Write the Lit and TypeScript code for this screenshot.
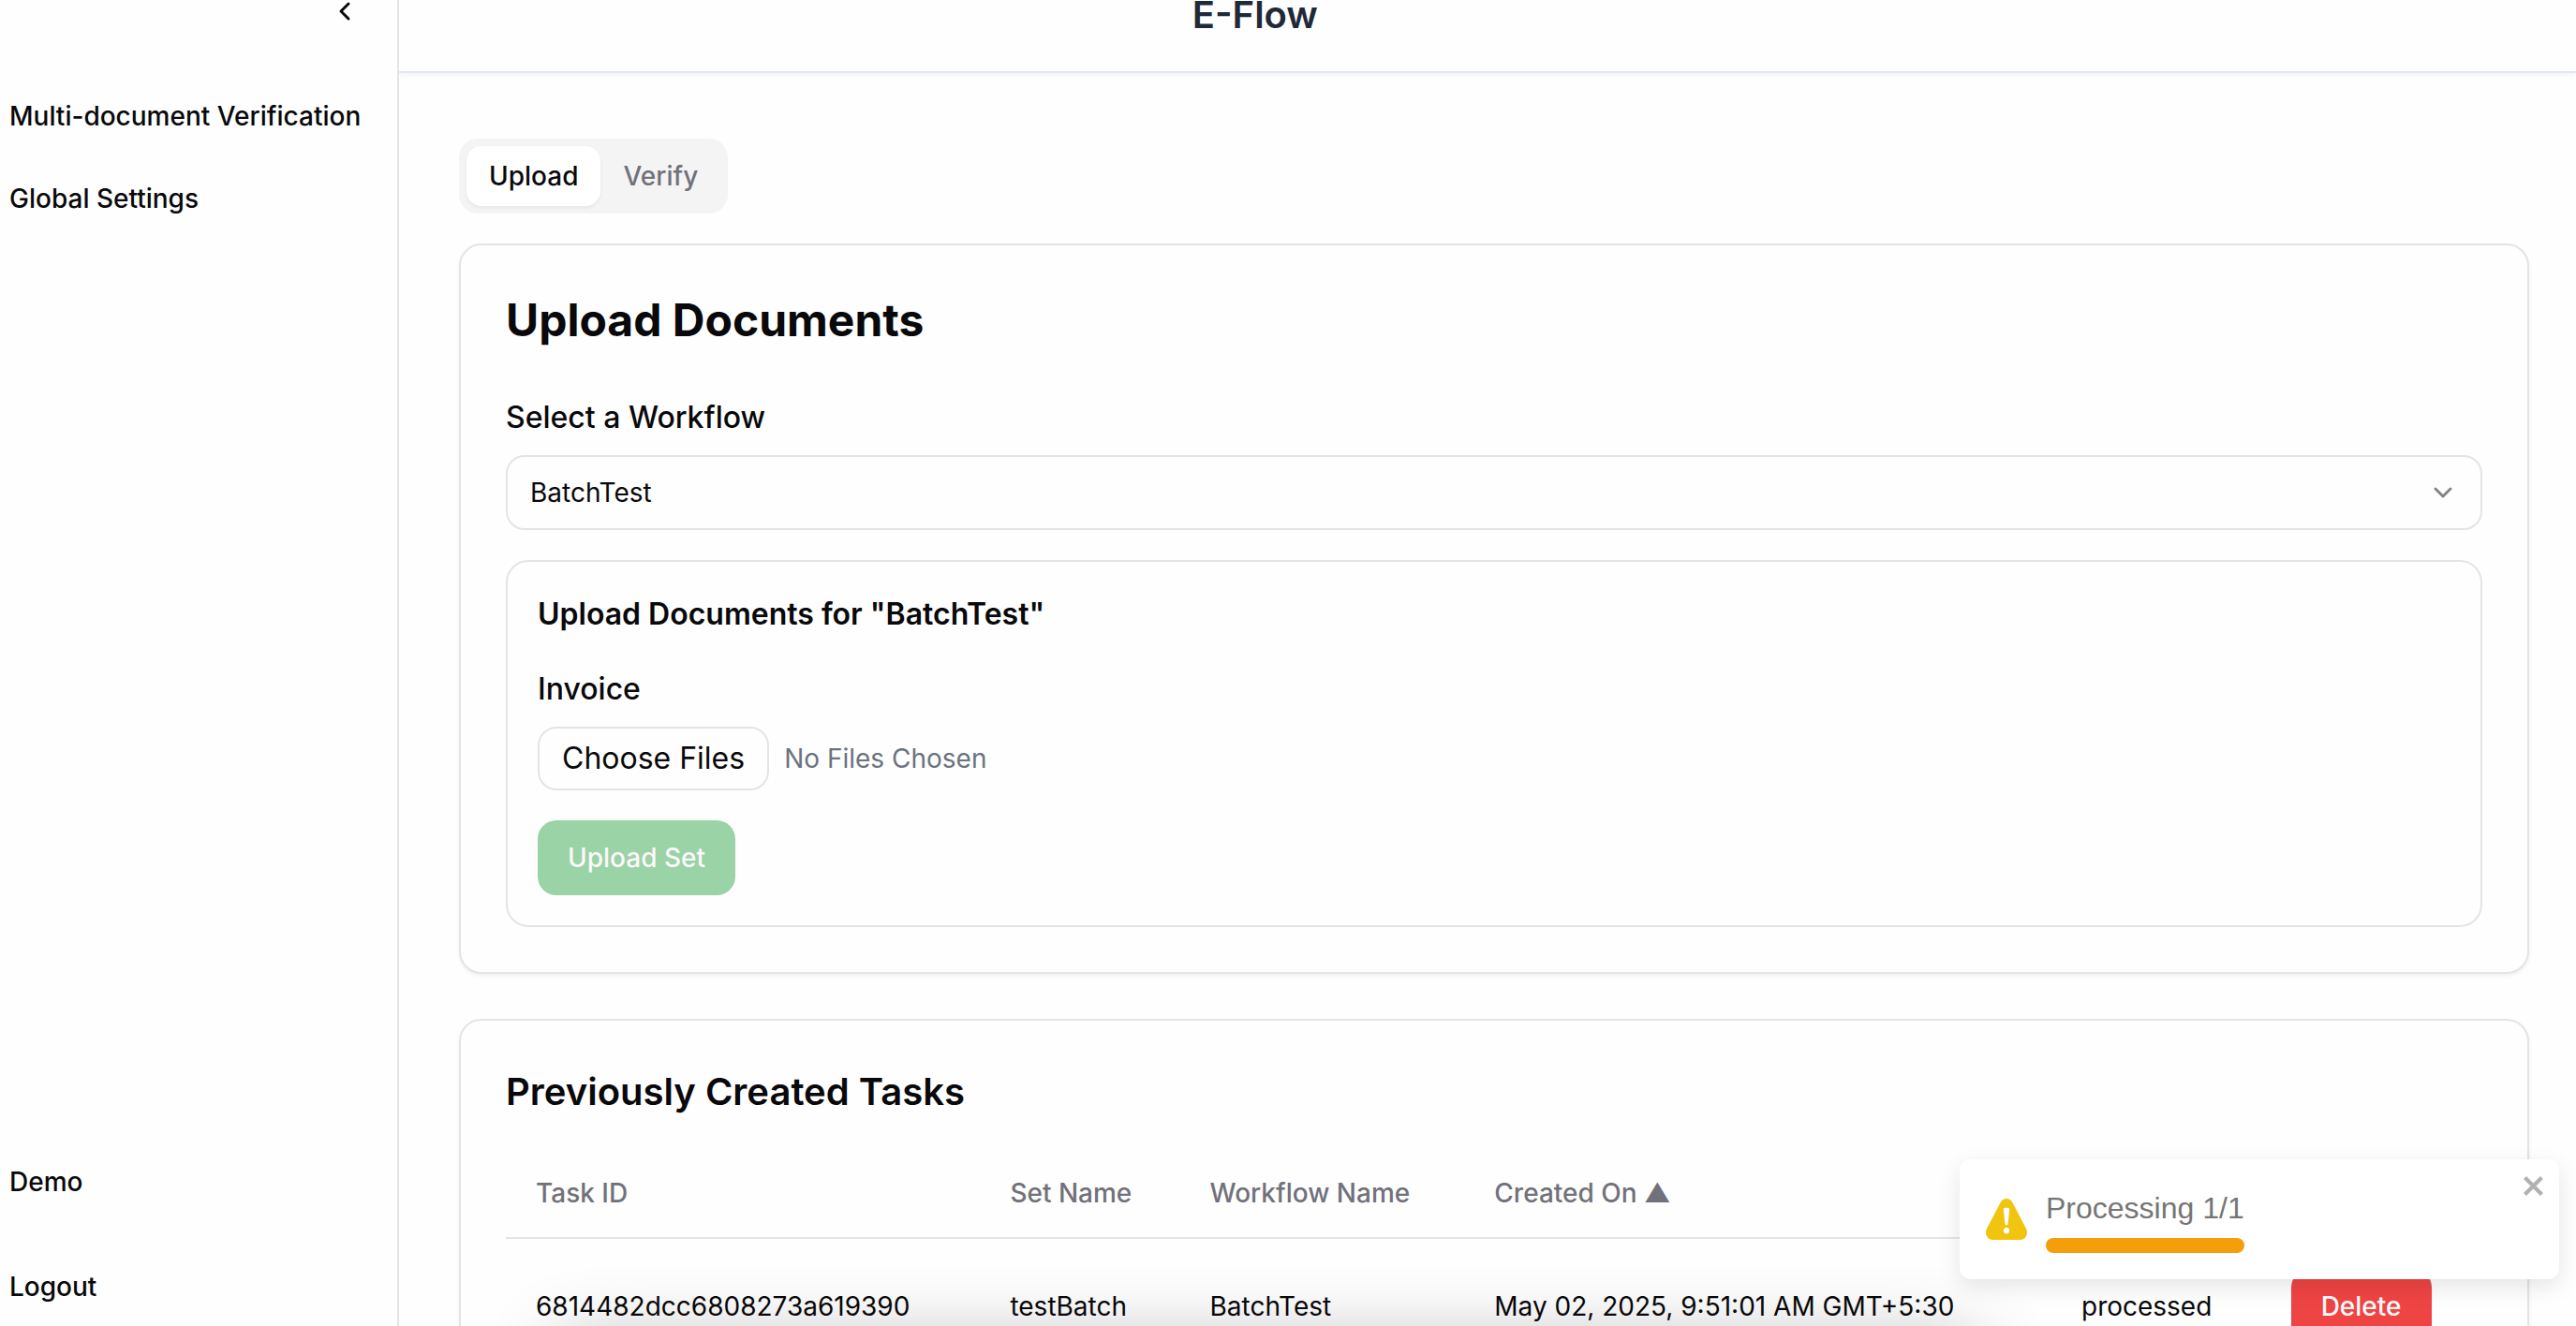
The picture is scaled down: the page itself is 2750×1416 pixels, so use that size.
import { LitElement, html, css } from "lit";
import { customElement, property, state } from "lit/decorators.js";

interface Task {
  id: string;
  setName: string;
  workflow: string;
  createdOn: string;
  status: string;
}

const TASKS: Task[] = [
  {
    id: "6814482dcc6808273a619390",
    setName: "testBatch",
    workflow: "BatchTest",
    createdOn: "May 02, 2025, 9:51:01 AM GMT+5:30",
    status: "processed",
  },
];

@customElement("app-sidebar")
export class AppSidebar extends LitElement {
  static styles = css`
    :host {
      display: flex;
      flex-direction: column;
      justify-content: space-between;
      box-sizing: border-box;
      height: 100%;
      border-right: 2px solid #e4e4e7;
    }
    .group {
      display: flex;
      flex-direction: column;
    }
    .collapse {
      align-self: flex-end;
      display: flex;
      margin: 0 40px 0 0;
      padding: 0;
      border: 0;
      background: none;
      color: #09090b;
      height: 28px;
      align-items: flex-start;
    }
    .top {
      gap: 48px;
    }
    .links {
      display: flex;
      flex-direction: column;
      padding: 28px 10px 0;
      gap: 48px;
    }
    .bottom {
      padding: 0 10px 22px;
      gap: 72px;
    }
    a {
      color: #09090b;
      font-size: 28px;
      line-height: 40px;
      font-weight: 500;
      text-decoration: none;
      white-space: nowrap;
    }
  `;

  render() {
    return html`
      <div class="group top">
        <button class="collapse" aria-label="Collapse sidebar">
          <svg width="32" height="24" viewBox="0 0 32 24" fill="none" stroke="currentColor" stroke-width="3" stroke-linecap="round" stroke-linejoin="round">
            <path d="M20 4l-8 8 8 8" />
          </svg>
        </button>
        <nav class="links">
          <a href="#multi-document">Multi-document Verification</a>
          <a href="#settings">Global Settings</a>
        </nav>
      </div>
      <nav class="group bottom">
        <a href="#demo">Demo</a>
        <a href="#logout">Logout</a>
      </nav>
    `;
  }
}

@customElement("upload-panel")
export class UploadPanel extends LitElement {
  @state() private workflow = "BatchTest";

  static styles = css`
    :host {
      display: flex;
      flex-direction: column;
      box-sizing: border-box;
      padding: 48px;
      border: 2px solid #e4e4e7;
      border-radius: 24px;
      background: #fefefe;
      box-shadow: 0 2px 4px rgba(0, 0, 0, 0.06);
    }
    h2,
    h3 {
      margin: 0;
    }
    h2 {
      font-size: 48px;
      line-height: 64px;
      font-weight: 700;
    }
    label {
      font-size: 32px;
      line-height: 48px;
      font-weight: 500;
    }
    .field-label {
      margin-top: 48px;
    }
    .select-wrap {
      display: grid;
      align-items: center;
      margin-top: 16px;
    }
    .select-wrap > * {
      grid-area: 1 / 1;
    }
    select {
      appearance: none;
      width: 100%;
      height: 80px;
      padding: 0 24px;
      border: 2px solid #e4e4e7;
      border-radius: 20px;
      background: #fefefe;
      color: #09090b;
      font: 400 28px/40px Inter, sans-serif;
    }
    .caret {
      justify-self: end;
      margin-right: 26px;
      pointer-events: none;
    }
    .set {
      display: flex;
      flex-direction: column;
      align-items: flex-start;
      margin-top: 32px;
      padding: 32px;
      border: 2px solid #e4e4e7;
      border-radius: 24px;
    }
    h3 {
      font-size: 32px;
      line-height: 48px;
      font-weight: 600;
    }
    .invoice {
      margin-top: 32px;
    }
    .files {
      display: flex;
      align-items: center;
      gap: 16px;
      margin-top: 16px;
    }
    .choose {
      height: 68px;
      padding: 0 24px;
      border: 2px solid #e4e4e7;
      border-radius: 20px;
      background: #fefefe;
      color: #09090b;
      font: 400 32px/48px Inter, sans-serif;
    }
    .hint {
      color: #6b7280;
      font-size: 28px;
      line-height: 40px;
    }
    .submit {
      height: 80px;
      margin-top: 32px;
      padding: 0 32px;
      border: 0;
      border-radius: 20px;
      background: #99d3a6;
      color: #fdf7f9;
      font: 500 28px/40px Inter, sans-serif;
    }
  `;

  private onPick(e: Event) {
    this.workflow = (e.target as HTMLSelectElement).value;
  }

  render() {
    return html`
      <h2>Upload Documents</h2>
      <label class="field-label" for="workflow">Select a Workflow</label>
      <div class="select-wrap">
        <select id="workflow" @change=${this.onPick}>
          <option value="BatchTest" selected>BatchTest</option>
        </select>
        <svg class="caret" width="32" height="32" viewBox="0 0 32 32" fill="none" stroke="#848484" stroke-width="3" stroke-linecap="round" stroke-linejoin="round">
          <path d="M8 12l8 8 8-8" />
        </svg>
      </div>
      <section class="set">
        <h3>Upload Documents for "${this.workflow}"</h3>
        <label class="invoice" for="choose">Invoice</label>
        <div class="files">
          <button id="choose" class="choose">Choose Files</button>
          <span class="hint">No Files Chosen</span>
        </div>
        <button class="submit" disabled>Upload Set</button>
      </section>
    `;
  }
}

@customElement("task-table")
export class TaskTable extends LitElement {
  @property({ attribute: false }) tasks: Task[] = [];

  static styles = css`
    :host {
      display: block;
      box-sizing: border-box;
      padding: 48px;
      border: 2px solid #e4e4e7;
      border-radius: 24px;
      background: #fefefe;
      box-shadow: 0 2px 4px rgba(0, 0, 0, 0.06);
    }
    h2 {
      margin: 0 0 32px;
      font-size: 40px;
      line-height: 56px;
      font-weight: 600;
    }
    table {
      width: 100%;
      border-collapse: collapse;
      table-layout: fixed;
      font-size: 28px;
      line-height: 40px;
    }
    .c-id {
      width: 24%;
    }
    .c-set {
      width: 10.1%;
    }
    .c-flow {
      width: 14.4%;
    }
    .c-date {
      width: 29.7%;
    }
    .c-status {
      width: 10.6%;
    }
    th,
    td {
      text-align: left;
      white-space: nowrap;
      border-bottom: 2px solid #e4e4e7;
    }
    th {
      height: 96px;
      padding: 0 32px;
      color: #71717a;
      font-weight: 500;
      box-sizing: border-box;
    }
    td {
      padding: 32px;
    }
    .delete {
      height: 80px;
      padding: 0 32px;
      border: 0;
      border-radius: 20px;
      background: #ef4444;
      color: #fafafa;
      font: 500 28px/40px Inter, sans-serif;
    }
  `;

  render() {
    return html`
      <h2>Previously Created Tasks</h2>
      <table>
        <colgroup>
          <col class="c-id" />
          <col class="c-set" />
          <col class="c-flow" />
          <col class="c-date" />
          <col class="c-status" />
          <col />
        </colgroup>
        <thead>
          <tr>
            <th>Task ID</th>
            <th>Set Name</th>
            <th>Workflow Name</th>
            <th>Created On ▲</th>
            <th aria-label="Status"></th>
            <th aria-label="Actions"></th>
          </tr>
        </thead>
        <tbody>
          ${this.tasks.map(
            (t) => html`
              <tr>
                <td>${t.id}</td>
                <td>${t.setName}</td>
                <td>${t.workflow}</td>
                <td>${t.createdOn}</td>
                <td>${t.status}</td>
                <td><button class="delete">Delete</button></td>
              </tr>
            `
          )}
        </tbody>
      </table>
    `;
  }
}

@customElement("progress-toast")
export class ProgressToast extends LitElement {
  static styles = css`
    :host {
      display: flex;
      align-items: flex-start;
      box-sizing: border-box;
      width: 640px;
      min-height: 128px;
      padding: 12px 12px 12px 28px;
      border-radius: 12px;
      background: #fff;
      color: #757575;
      box-shadow: 0 8px 24px rgba(0, 0, 0, 0.1);
      font: 400 32px/48px "Liberation Sans", Arial, sans-serif;
    }
    .icon {
      align-self: center;
      flex: none;
      margin-right: 20px;
    }
    .body {
      align-self: center;
    }
    .bar {
      height: 16px;
      margin-top: 8px;
      border-radius: 8px;
      background: #f59e0b;
    }
    .close {
      display: flex;
      margin-left: auto;
      padding: 0;
      border: 0;
      background: none;
      color: #000;
      opacity: 0.3;
    }
  `;

  render() {
    return html`
      <svg class="icon" width="44" height="44" viewBox="0 0 24 24" fill="#f1c40f">
        <path d="M23.32 17.191L15.438 2.184C14.728.833 13.416 0 11.996 0c-1.42 0-2.733.833-3.443 2.184L.533 17.448a4.744 4.744 0 000 4.368C1.243 23.167 2.555 24 3.975 24h16.05C22.22 24 24 22.044 24 19.632c0-.904-.251-1.746-.68-2.44zm-9.622 1.46c0 1.033-.724 1.823-1.698 1.823s-1.698-.79-1.698-1.822v-.043c0-1.028.724-1.822 1.698-1.822s1.698.79 1.698 1.822v.043zm.039-12.285l-.84 8.06c-.057.581-.408.943-.897.943-.49 0-.84-.367-.896-.942l-.84-8.065c-.057-.624.25-1.095.779-1.095h1.91c.528.005.84.476.784 1.1z" />
      </svg>
      <div class="body" role="status">
        <div>Processing 1/1</div>
        <div class="bar"></div>
      </div>
      <button class="close" aria-label="Close">
        <svg width="28" height="32" viewBox="0 0 14 16" fill="currentColor">
          <path d="M7.71 8.23l3.75 3.75-1.48 1.48-3.75-3.75-3.75 3.75L1 11.98l3.75-3.75L1 4.48 2.48 3l3.75 3.75L9.98 3l1.48 1.48-3.75 3.75z" />
        </svg>
      </button>
    `;
  }
}

@customElement("app-root")
export class AppRoot extends LitElement {
  @state() private tab: "upload" | "verify" = "upload";

  static styles = css`
    :host {
      display: grid;
      grid-template-columns: 426px minmax(0, 1fr);
      position: relative;
      height: 100vh;
      overflow: hidden;
      background: #fefefe;
      color: #09090b;
      font-family: Inter, sans-serif;
    }
    .main {
      display: flex;
      flex-direction: column;
      min-height: 0;
      overflow: hidden;
    }
    .header {
      display: flex;
      flex: none;
      padding-bottom: 44px;
      border-bottom: 2px solid #e2e8f0;
      box-shadow: 0 2px 4px rgba(0, 0, 0, 0.05);
    }
    .header::before {
      content: "";
      flex: 848;
    }
    .header::after {
      content: "";
      flex: 1345;
    }
    .title {
      margin: 0;
      color: #1f2937;
      font-size: 40px;
      line-height: 32px;
      font-weight: 600;
    }
    .content {
      display: flex;
      flex: none;
      flex-direction: column;
      padding: 70px 50px 48px 64px;
    }
    .tabs {
      display: flex;
      align-self: flex-start;
      padding: 8px;
      border-radius: 20px;
      background: #f4f4f5;
    }
    .tab {
      height: 64px;
      padding: 0 24px;
      border: 0;
      border-radius: 16px;
      background: none;
      color: #71717a;
      font: 500 28px/40px Inter, sans-serif;
    }
    .tab[aria-selected="true"] {
      background: #fff;
      color: #09090b;
      box-shadow: 0 2px 4px rgba(0, 0, 0, 0.06);
    }
    upload-panel {
      margin-top: 32px;
    }
    task-table {
      margin-top: 48px;
    }
    .shade {
      position: absolute;
      left: 596px;
      right: 640px;
      bottom: -120px;
      height: 100px;
      box-shadow: 0 0 80px rgba(0, 0, 0, 0.3);
      pointer-events: none;
    }
    progress-toast {
      position: absolute;
      right: 18px;
      bottom: 50px;
    }
  `;

  private tabButton(id: "upload" | "verify", label: string) {
    return html`<button
      class="tab"
      role="tab"
      aria-selected=${this.tab === id ? "true" : "false"}
      @click=${() => (this.tab = id)}
    >${label}</button>`;
  }

  render() {
    return html`
      <app-sidebar></app-sidebar>
      <div class="main">
        <header class="header"><h1 class="title">E-Flow</h1></header>
        <main class="content">
          <div class="tabs" role="tablist">
            ${this.tabButton("upload", "Upload")}${this.tabButton("verify", "Verify")}
          </div>
          <upload-panel></upload-panel>
          <task-table .tasks=${TASKS}></task-table>
        </main>
      </div>
      <div class="shade"></div>
      <progress-toast></progress-toast>
    `;
  }
}
